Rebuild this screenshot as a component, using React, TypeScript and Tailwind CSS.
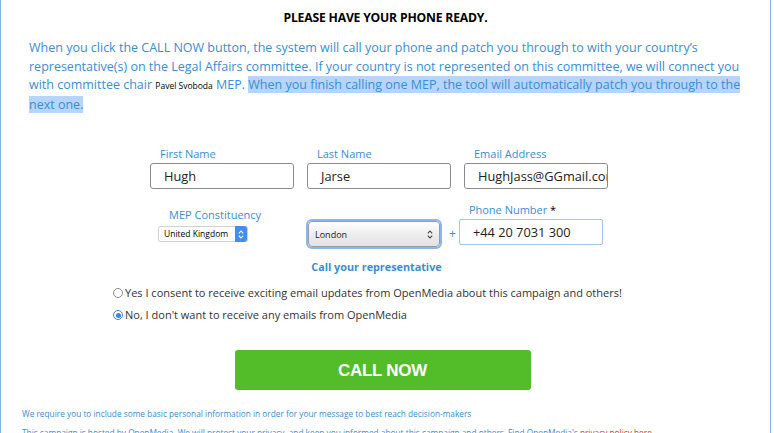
import React from "react";

const BLUE = "text-[#3a8dd6]";

function Field({ label, value }: { label: string; value: string }) {
  return (
    <div className="flex w-[144px] flex-col">
      <label className={`pl-[10px] text-[11px] leading-[16px] ${BLUE}`}>{label}</label>
      <div className="mt-[1px] flex h-[26px] items-center overflow-hidden whitespace-nowrap rounded-[3px] border border-[#8a8a8a] pl-[13px] text-[12.8px] text-[#222]">
        {value}
      </div>
    </div>
  );
}

function Stepper({ className }: { className?: string }) {
  return (
    <svg width="6" height="9" viewBox="0 0 6 9" className={className}>
      <path d="M0.8 3.4 L3 1 L5.2 3.4" fill="none" stroke="currentColor" strokeWidth="1.1" />
      <path d="M0.8 5.6 L3 8 L5.2 5.6" fill="none" stroke="currentColor" strokeWidth="1.1" />
    </svg>
  );
}

function Radio({ checked }: { checked?: boolean }) {
  return checked ? (
    <span className="flex h-[10px] w-[10px] items-center justify-center rounded-full border border-[#3b86e0] bg-white">
      <span className="h-[5px] w-[5px] rounded-full bg-[#3b86e0]" />
    </span>
  ) : (
    <span className="h-[10px] w-[10px] rounded-full border border-[#8c8c8c] bg-white" />
  );
}

export default function App() {
  return (
    <div className="h-[433px] w-[774px] overflow-hidden bg-white font-['Open_Sans',sans-serif]">
      <div className="min-h-[470px] w-[771px] border-x border-[#83b4e4] pt-[10px]">
        <h2 className="text-center text-[12.2px] font-bold leading-[16px] tracking-[-0.2px] text-black">
          PLEASE HAVE YOUR PHONE READY.
        </h2>

        <p className={`mt-[13px] pl-[28px] pr-[24px] text-[12.5px] leading-[18.6px] ${BLUE}`}>
          When you click the CALL NOW button, the system will call your phone and patch you through to with your
          country’s representative(s) on the Legal Affairs committee. If your country is not represented on this
          committee, we will connect you with committee chair{" "}
          <span className="text-[8.5px] text-black">Pavel Svoboda</span> MEP.{" "}
          <span className="bg-[#b5d5fb]">
            When you finish calling one MEP, the tool will automatically patch you through to the next one.
          </span>
        </p>

        <div className="mt-[32px] flex gap-[13px] pl-[149px]">
          <Field label="First Name" value="Hugh" />
          <Field label="Last Name" value="Jarse" />
          <Field label="Email Address" value="HughJass@GGmail.com" />
        </div>

        <div className="mt-[13px] flex items-start pl-[157px]">
          <div className="mt-[5px] flex w-[150px] flex-col">
            <label className={`pl-[11px] text-[11px] leading-[16px] ${BLUE}`}>MEP Constituency</label>
            <div className="mt-[3px] flex h-[16px] w-[90px] items-center justify-between whitespace-nowrap rounded-[2px] border border-[#d0d0d0] bg-white pl-[5px] text-[8.5px] text-black">
              United Kingdom
              <span className="flex h-[16px] w-[12px] items-center justify-center rounded-r-[3px] bg-[#3f8ef0] text-white">
                <Stepper />
              </span>
            </div>
          </div>

          <div className="mt-[19px] flex h-[26px] w-[132px] items-center justify-between rounded-[4px] border border-[#9a9a9a] bg-gradient-to-b from-[#ffffff] via-[#eeeeee] to-[#e2e2e2] pl-[6px] pr-[6px] text-[9px] text-[#222] shadow-[0_0_0_2px_#8db7ec]">
            London
            <Stepper className="text-[#444]" />
          </div>

          <span className={`ml-[9px] mt-[24px] text-[12px] leading-[16px] ${BLUE}`}>+</span>

          <div className="ml-[3px] flex w-[144px] flex-col">
            <label className={`pl-[10px] text-[11px] leading-[16px] ${BLUE}`}>
              Phone Number <span className="text-black">*</span>
            </label>
            <div className="mt-[1px] flex h-[26px] items-center rounded-[2px] border border-[#9ec5ec] pl-[13px] text-[12.8px] text-[#222]">
              +44 20 7031 300
            </div>
          </div>
        </div>

        <div className={`mt-[12px] pr-[18px] text-center text-[10.8px] font-bold leading-[16px] ${BLUE}`}>
          Call your representative
        </div>

        <div className="mt-[10px] flex flex-col gap-[6px] pl-[112px] text-[11px] leading-[16px] text-[#333]">
          <div className="flex items-center gap-[2px]">
            <Radio />
            Yes I consent to receive exciting email updates from OpenMedia about this campaign and others!
          </div>
          <div className="flex items-center gap-[2px]">
            <Radio checked />
            No, I don't want to receive any emails from OpenMedia
          </div>
        </div>

        <div className="mt-[27px] flex justify-center pr-[6px]">
          <button className="flex h-[40px] w-[296px] items-center justify-center rounded-[3px] bg-[#52bc29] font-['Liberation_Sans',sans-serif] text-[17px] font-bold tracking-[-0.3px] text-white">
            CALL NOW
          </button>
        </div>

        <div className={`mt-[14px] pl-[21px] text-[8.3px] leading-[19px] ${BLUE}`}>
          <p>We require you to include some basic personal information in order for your message to best reach decision-makers</p>
          <p>
            This campaign is hosted by OpenMedia. We will protect your privacy, and keep you informed about this campaign and
            others. Find OpenMedia's <span className="text-[#e0342b]">privacy policy here</span>.
          </p>
        </div>
      </div>
    </div>
  );
}
